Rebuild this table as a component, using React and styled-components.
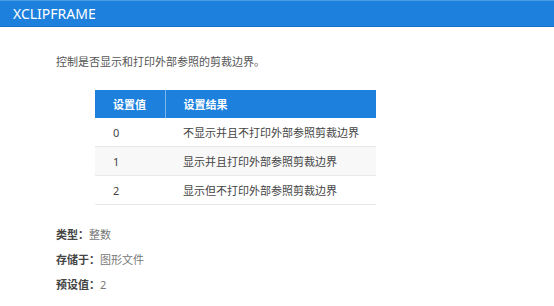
import React from "react";
import styled, { createGlobalStyle } from "styled-components";

const Global = createGlobalStyle`
  html, body { margin: 0; padding: 0; background: #fff; }
  body { font-family: "Noto Sans", "Noto Sans CJK SC", sans-serif; color: #555; }
`;

const Page = styled.div`
  width: 554px;
  height: 306px;
  overflow: hidden;
  background: #fff;
`;

const TitleBar = styled.div`
  height: 25px;
  display: flex;
  align-items: center;
  padding-left: 13px;
  background: #1d80dd;
  border-top: 1px solid #4b9be6;
  border-bottom: 1px solid #1673cc;
  color: #fff;
  font-size: 14px;
  font-family: "Noto Sans", sans-serif;
`;

const Content = styled.div`
  padding: 0 0 0 56px;
`;

const Desc = styled.p`
  margin: 26px 0 0;
  font-size: 11px;
  line-height: 18px;
  color: #555;
  font-family: "Noto Sans", "Noto Sans CJK SC", sans-serif;
`;

const Table = styled.table`
  margin: 19px 0 0 39px;
  width: 281px;
  border-collapse: collapse;
  font-size: 11px;
  font-family: "Noto Sans", "Noto Sans CJK SC", sans-serif;
`;

const Th = styled.th`
  height: 28px;
  padding: 0 0 0 18px;
  text-align: left;
  background: #1d80dd;
  color: #fff;
  font-weight: bold;
  width: ${(p) => p.$w || "auto"};
  box-sizing: border-box;
  border-left: ${(p) => (p.$divider ? "1px solid #7cb6ec" : "none")};
`;

const Tr = styled.tr`
  background: ${(p) => (p.$alt ? "#f8f8f8" : "#fff")};
  border-bottom: 1px solid #e8e8e8;
`;

const Td = styled.td`
  height: 28px;
  padding: 0 0 0 18px;
  color: #444;
`;

const Props = styled.div`
  margin-top: 17px;
  display: flex;
  flex-direction: column;
  font-size: 11px;
  line-height: 25px;
  font-family: "Noto Sans", "Noto Sans CJK SC", sans-serif;
`;

const Label = styled.span`
  font-weight: bold;
  color: #444;
`;

const Value = styled.span`
  color: #777;
`;

const rows = [
  ["0", "不显示并且不打印外部参照剪裁边界"],
  ["1", "显示并且打印外部参照剪裁边界"],
  ["2", "显示但不打印外部参照剪裁边界"],
];

export default function App() {
  return (
    <Page>
      <Global />
      <TitleBar>XCLIPFRAME</TitleBar>
      <Content>
        <Desc>控制是否显示和打印外部参照的剪裁边界。</Desc>
        <Table>
          <thead>
            <tr>
              <Th $w="70px">设置值</Th>
              <Th $divider>设置结果</Th>
            </tr>
          </thead>
          <tbody>
            {rows.map((r, i) => (
              <Tr key={r[0]} $alt={i === 1}>
                <Td>{r[0]}</Td>
                <Td>{r[1]}</Td>
              </Tr>
            ))}
          </tbody>
        </Table>
        <Props>
          <div><Label>类型：</Label><Value>整数</Value></div>
          <div><Label>存储于：</Label><Value>图形文件</Value></div>
          <div><Label>预设值：</Label><Value>2</Value></div>
        </Props>
      </Content>
    </Page>
  );
}
